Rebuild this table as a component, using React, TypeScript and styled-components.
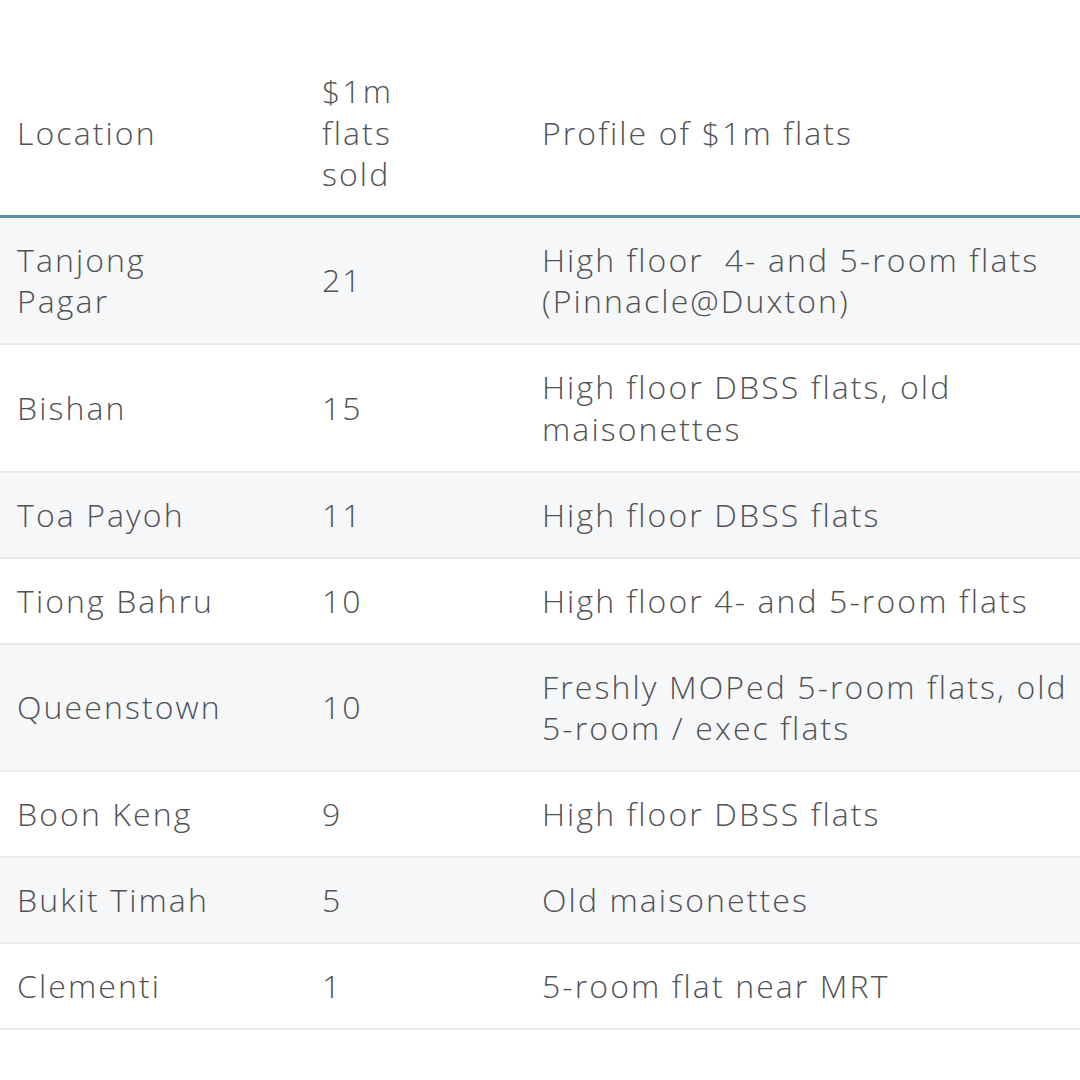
import React from "react";
import styled, { createGlobalStyle } from "styled-components";

const Global = createGlobalStyle`
  html, body { margin: 0; padding: 0; background: #ffffff; }
  body { width: 1080px; height: 1080px; overflow: hidden; }
`;

const Page = styled.div`
  width: 1080px;
  overflow: hidden;
  padding-top: 50px;
  font-family: "Open Sans", "Noto Sans", sans-serif;
  color: #515254;
`;

const Table = styled.table`
  width: 1100px;
  border-collapse: collapse;
  table-layout: fixed;
  font-size: 32px;
  line-height: 41.5px;
  letter-spacing: 2.1px;
  font-weight: 340;
`;

const HeadCell = styled.th<{ $w?: number }>`
  ${(p) => (p.$w ? `width: ${p.$w}px;` : "")}
  text-align: left;
  font-weight: 340;
  vertical-align: middle;
  padding: 20px 0 20px 17px;
  border-bottom: 3px solid #5b8ba9;
`;

const Row = styled.tr<{ $alt: boolean }>`
  background: ${(p) => (p.$alt ? "#f6f7f9" : "#ffffff")};
  border-bottom: 2px solid #e9eaec;
`;

const Cell = styled.td`
  padding: 21px 0 21.5px 17px;
  vertical-align: middle;
  white-space: nowrap;
`;

type R = { loc: string[]; n: string; prof: string[] };

const rows: R[] = [
  { loc: ["Tanjong", "Pagar"], n: "21", prof: ["High floor\u00a0 4- and 5-room flats", "(Pinnacle@Duxton)"] },
  { loc: ["Bishan"], n: "15", prof: ["High floor DBSS flats, old", "maisonettes"] },
  { loc: ["Toa Payoh"], n: "11", prof: ["High floor DBSS flats"] },
  { loc: ["Tiong Bahru"], n: "10", prof: ["High floor 4- and 5-room flats"] },
  { loc: ["Queenstown"], n: "10", prof: ["Freshly MOPed 5-room flats, old", "5-room / exec flats"] },
  { loc: ["Boon Keng"], n: "9", prof: ["High floor DBSS flats"] },
  { loc: ["Bukit Timah"], n: "5", prof: ["Old maisonettes"] },
  { loc: ["Clementi"], n: "1", prof: ["5-room flat near MRT"] },
];

const Lines: React.FC<{ lines: string[] }> = ({ lines }) => (
  <>
    {lines.map((l, i) => (
      <React.Fragment key={i}>
        {i > 0 && <br />}
        {l}
      </React.Fragment>
    ))}
  </>
);

export default function App() {
  return (
    <Page>
      <Global />
      <Table>
        <thead>
          <tr>
            <HeadCell $w={288}>Location</HeadCell>
            <HeadCell $w={203}>
              <Lines lines={["$1m", "flats", "sold"]} />
            </HeadCell>
            <HeadCell>Profile of $1m flats</HeadCell>
          </tr>
        </thead>
        <tbody>
          {rows.map((r, i) => (
            <Row key={i} $alt={i % 2 === 0}>
              <Cell>
                <Lines lines={r.loc} />
              </Cell>
              <Cell>{r.n}</Cell>
              <Cell>
                <Lines lines={r.prof} />
              </Cell>
            </Row>
          ))}
        </tbody>
      </Table>
    </Page>
  );
}
